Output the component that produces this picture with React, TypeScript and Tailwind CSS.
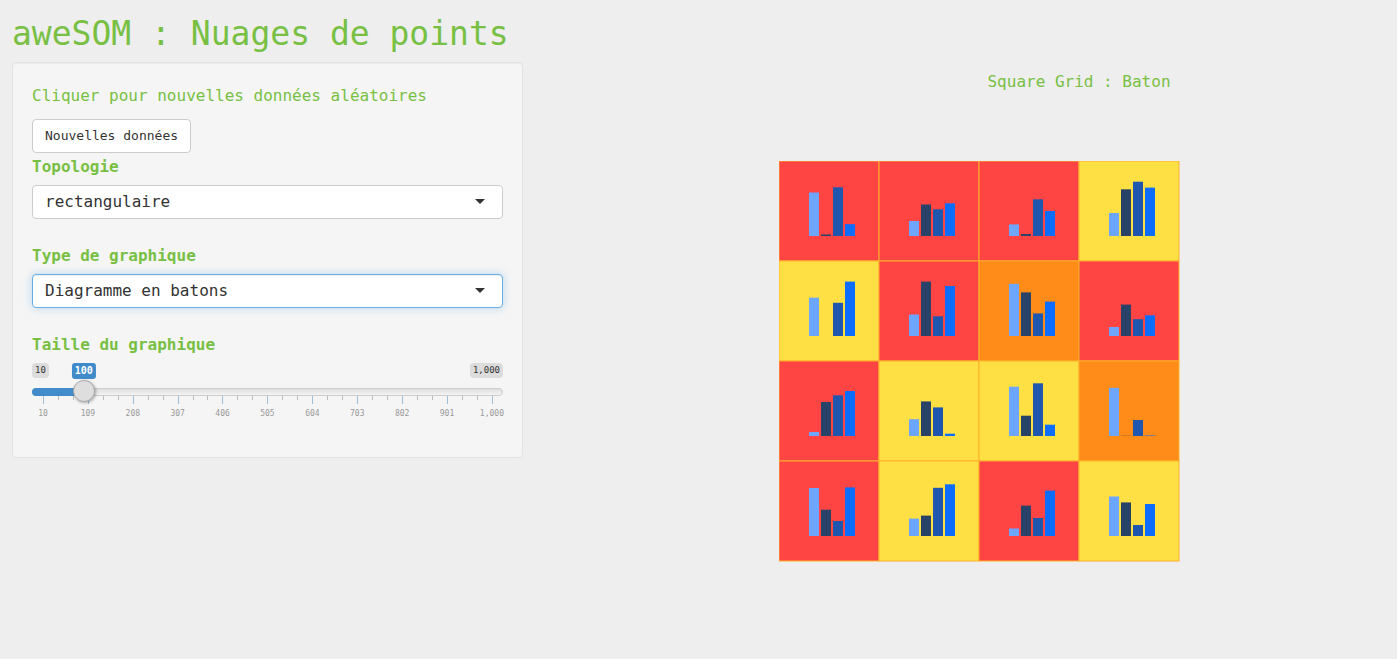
import { useState, type ReactNode } from "react";

const CELL = 100;
const BASELINE = 75;
const BAR_COLORS = ["#6ca6ff", "#284268", "#1f57af", "#0c6dff"];

const RED = "#ff4444";
const YELLOW = "#ffe044";
const ORANGE = "#ff8b18";

type Cell = { fill: string; bars: number[] };

const CELLS: Cell[] = [
  { fill: RED, bars: [43.5, 1.5, 48.7, 11.8] },
  { fill: RED, bars: [15, 31.5, 26.7, 32.7] },
  { fill: RED, bars: [11.6, 2, 36.7, 25] },
  { fill: YELLOW, bars: [23, 46.7, 54.3, 48.4] },
  { fill: YELLOW, bars: [38.3, 0, 33.2, 54.4] },
  { fill: RED, bars: [21.5, 54.4, 19.7, 50] },
  { fill: ORANGE, bars: [52.2, 43.6, 22.6, 34.4] },
  { fill: RED, bars: [9, 31.4, 16.8, 20.7] },
  { fill: RED, bars: [4, 34, 40.7, 45] },
  { fill: YELLOW, bars: [16.8, 34.6, 28.6, 2.3] },
  { fill: YELLOW, bars: [49.3, 20.3, 52.7, 11.3] },
  { fill: ORANGE, bars: [48.2, 0.2, 16, 0.5] },
  { fill: RED, bars: [48, 26.3, 15, 48.6] },
  { fill: YELLOW, bars: [17.4, 20.4, 48.2, 51.7] },
  { fill: RED, bars: [7.5, 30.4, 18, 45.4] },
  { fill: YELLOW, bars: [39.5, 33.6, 11, 32] },
];

const MIN = 10;
const MAX = 1000;
const SCALE = ["10", "109", "208", "307", "406", "505", "604", "703", "802", "901", "1,000"];

function SelectField({
  id,
  label,
  options,
  active,
}: {
  id: string;
  label: string;
  options: string[];
  active?: boolean;
}) {
  return (
    <div className="mb-[23px]">
      <FieldLabel htmlFor={id}>{label}</FieldLabel>
      <div className="relative">
        <select
          id={id}
          className={
            active
              ? "block h-[34px] w-full appearance-none rounded border border-[#66afe9] bg-white px-3 text-base text-[#333] shadow-[inset_0_1px_1px_rgba(0,0,0,0.075),0_0_8px_rgba(102,175,233,0.45)] outline-none"
              : "block h-[34px] w-full appearance-none rounded border border-[#ccc] bg-white px-3 text-base text-[#333] outline-none"
          }
        >
          {options.map((o) => (
            <option key={o}>{o}</option>
          ))}
        </select>
        <svg
          className="pointer-events-none absolute top-[14px] right-[18px] h-[5px] w-[10px]"
          viewBox="0 0 10 5"
          aria-hidden="true"
        >
          <path d="M0 0H10L5 5Z" fill="#333" />
        </svg>
      </div>
    </div>
  );
}

function FieldLabel({ htmlFor, children }: { htmlFor: string; children: ReactNode }) {
  return (
    <label htmlFor={htmlFor} className="mb-[5px] block text-base leading-[27px] font-bold text-[#78c043]">
      {children}
    </label>
  );
}

function SizeSlider() {
  const [value, setValue] = useState(100);
  const ratio = (value - MIN) / (MAX - MIN);
  const center = `calc(11px + (100% - 22px) * ${ratio})`;
  return (
    <div>
      <FieldLabel htmlFor="size">Taille du graphique</FieldLabel>
      <div className="relative flex h-4 items-start justify-between text-[9px] leading-[15px] text-[#333]">
        <span className="rounded bg-[#dcdcdc] px-[3px]">10</span>
        <span className="rounded bg-[#dcdcdc] px-[3px]">1,000</span>
        <output
          htmlFor="size"
          className="absolute top-0 -translate-x-1/2 rounded-[3px] bg-[#428bca] px-[3px] text-[10px] leading-4 font-bold text-white"
          style={{ left: center }}
        >
          {value.toLocaleString("en-US")}
        </output>
      </div>
      <div className="relative mt-[9px] h-2 rounded-lg border border-[#ccc] bg-linear-to-b from-[#dedede] to-white to-150%">
        <div className="absolute -top-px -left-px h-2 rounded-l-lg bg-[#428bca]" style={{ width: center }} />
        <input
          id="size"
          type="range"
          min={MIN}
          max={MAX}
          value={value}
          onChange={(e) => setValue(Number(e.target.value))}
          className="absolute -top-[9px] -left-px z-10 h-[22px] w-[calc(100%+2px)] cursor-pointer appearance-none bg-transparent outline-none [&::-webkit-slider-thumb]:h-[22px] [&::-webkit-slider-thumb]:w-[22px] [&::-webkit-slider-thumb]:appearance-none [&::-webkit-slider-thumb]:rounded-full [&::-webkit-slider-thumb]:border [&::-webkit-slider-thumb]:border-[#ababab] [&::-webkit-slider-thumb]:bg-[#dedede] [&::-webkit-slider-thumb]:shadow-[1px_1px_3px_rgba(0,0,0,0.3)]"
        />
      </div>
      <div className="mr-[10px] ml-[11px] flex h-[13px] items-start justify-between" aria-hidden="true">
        {Array.from({ length: 31 }, (_, i) => (
          <span key={i} className={i % 3 === 0 ? "h-2 w-px bg-[#99bfdf]" : "h-1 w-px bg-[#bbb]"} />
        ))}
      </div>
      <div className="mx-[11px] flex justify-between text-[8px] leading-[10px] text-[#999]" aria-hidden="true">
        {SCALE.map((s) => (
          <span key={s} className="flex w-0 justify-center">
            {s}
          </span>
        ))}
      </div>
    </div>
  );
}

function SquareGrid() {
  return (
    <svg className="block" width="401" height="401" viewBox="0 0 401 401" role="img" aria-label="Square Grid">
      {CELLS.map((cell, i) => {
        const x = (i % 4) * CELL;
        const y = Math.floor(i / 4) * CELL;
        return (
          <g key={i} transform={`translate(${x} ${y})`}>
            <rect width={CELL} height={CELL} fill={cell.fill} stroke="#ffb02a" strokeWidth="1" />
            {cell.bars.map((h, b) => (
              <rect key={b} x={30 + b * 12} y={BASELINE - h} width="10" height={h} fill={BAR_COLORS[b]} />
            ))}
          </g>
        );
      })}
    </svg>
  );
}

export default function App() {
  return (
    <div className="min-h-screen bg-[#eee] pr-[18px] pb-8 pl-3 font-['DejaVu_Sans_Mono',monospace] text-[#333]">
      <h1 className="pt-[14px] pb-[9px] text-[33px] leading-[39px] text-[#78c043]">aweSOM : Nuages de points</h1>
      <div className="grid grid-cols-[511fr_256fr_600fr] items-start">
        <form className="rounded border border-[#e3e3e3] bg-[#f5f5f5] px-[19px] pt-5 pb-[38px] shadow-[inset_0_1px_1px_rgba(0,0,0,0.05)]">
          <h4 className="mb-[10px] text-base leading-[26px] text-[#78c043]">
            Cliquer pour nouvelles données aléatoires
          </h4>
          <button
            type="button"
            className="block h-[34px] rounded border border-[#ccc] bg-white px-3 text-[13px]"
          >
            Nouvelles données
          </button>
          <SelectField id="topology" label="Topologie" options={["rectangulaire", "hexagonale"]} />
          <SelectField id="chart" label="Type de graphique" options={["Diagramme en batons", "Camembert"]} active />
          <SizeSlider />
        </form>
        <main className="col-start-3">
          <h4 className="pt-[7px] pb-[66px] text-center text-base leading-[26px] text-[#78c043]">
            Square Grid : Baton
          </h4>
          <SquareGrid />
        </main>
      </div>
    </div>
  );
}
